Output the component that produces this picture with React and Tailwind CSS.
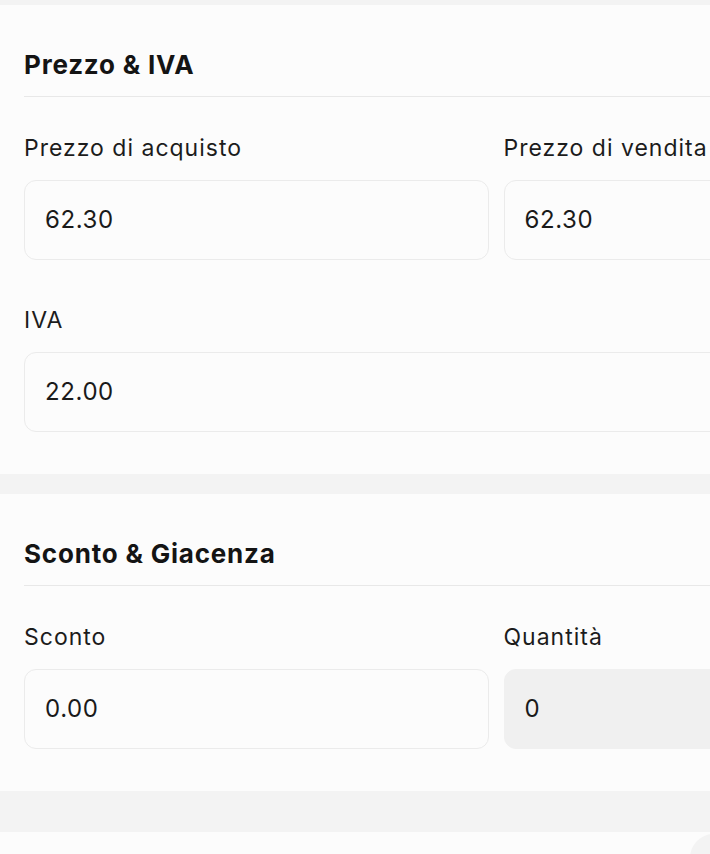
import React from 'react';

function Field({ label, value, disabled }) {
    return (
        <div>
            <div className="text-[23px] leading-7 tracking-[1px] text-[#1c1c1c] mb-[18px]">{label}</div>
            <div
                className={
                    disabled
                        ? 'h-20 rounded-xl border border-[#f0f0f0] bg-[#f0f0f0] px-5 flex items-center text-[24px] tracking-[0.6px] text-[#1a1a1a]'
                        : 'h-20 rounded-xl border border-[#ebebeb] bg-[#fcfcfc] px-5 flex items-center text-[24px] tracking-[0.6px] text-[#1a1a1a]'
                }
            >
                {value}
            </div>
        </div>
    );
}

function Section({ title, children }) {
    return (
        <div className="bg-[#fcfcfc] px-6 pt-[44px] pb-[42px]">
            <h2 className="text-[26px] leading-8 font-bold tracking-[0.8px] text-[#141414] pb-[15px] border-b border-[#e8e8e8]">{title}</h2>
            <div className="mt-[37px] space-y-[46px]">{children}</div>
        </div>
    );
}

export default function App() {
    return (
        <div className="w-full h-[854px] overflow-hidden bg-[#f3f3f3]" style={{ fontFamily: 'Inter, "Noto Sans", sans-serif' }}>
            <div className="w-[992px] pt-[5px]">
                <Section title="Prezzo & IVA">
                    <div className="grid grid-cols-2 gap-[15px]">
                        <Field label="Prezzo di acquisto" value="62.30" />
                        <Field label="Prezzo di vendita" value="62.30" />
                    </div>
                    <Field label="IVA" value="22.00" />
                </Section>

                <div className="h-5" />

                <Section title="Sconto & Giacenza">
                    <div className="grid grid-cols-2 gap-[15px]">
                        <Field label="Sconto" value="0.00" />
                        <Field label="Quantità" value="0" disabled />
                    </div>
                </Section>

                <div className="h-[41px]" />

                <div className="bg-[#fcfcfc] h-[60px] pt-[2px] pl-[690px]">
                    <div className="w-12 h-12 rounded-full bg-[#f3f3f3]" />
                </div>
            </div>
        </div>
    );
}
